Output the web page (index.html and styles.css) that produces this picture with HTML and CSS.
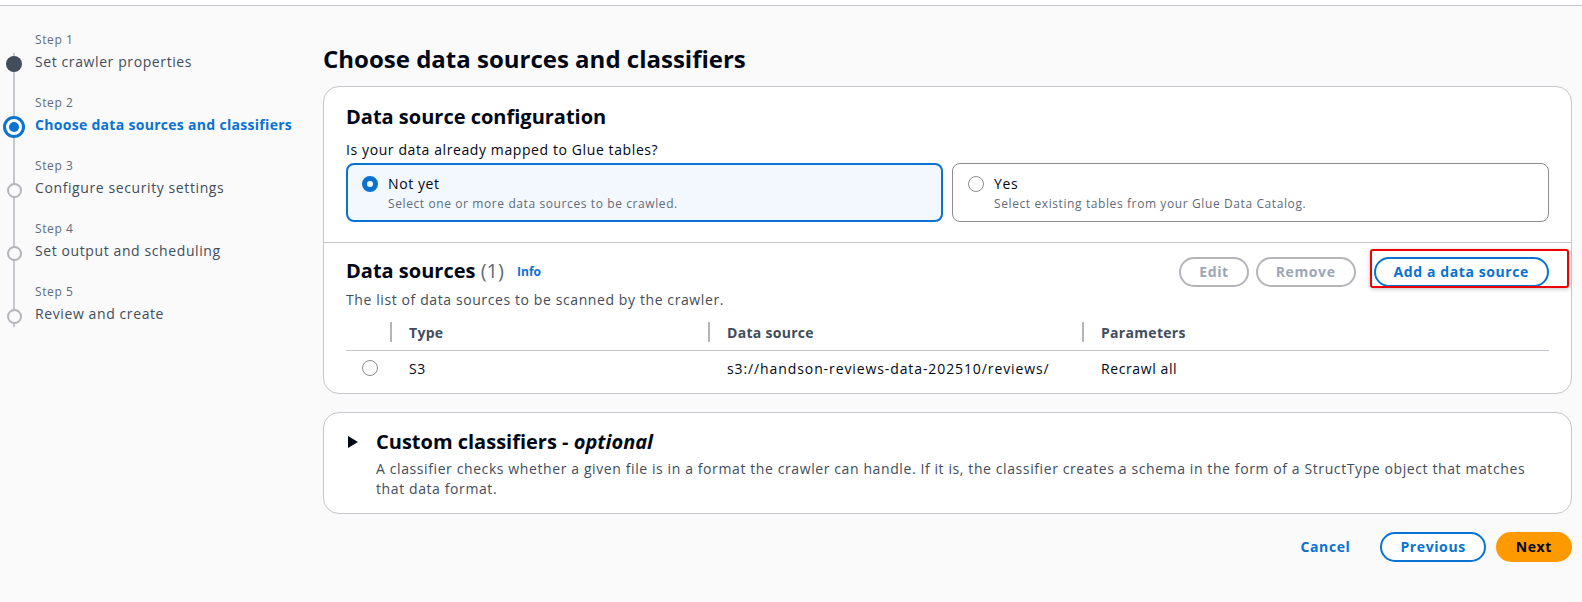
FILE: index.html
```html
<!DOCTYPE html>
<html lang="en">
<head>
<meta charset="utf-8">
<title>Choose data sources and classifiers</title>
<link rel="stylesheet" href="styles.css">
</head>
<body>
<div class="topbar"></div>
<div class="layout">
  <nav class="steps">
    <div class="step">
      <div class="rail"><span class="seg seg-top none"></span><span class="dotbox"><span class="dot done"></span></span><span class="seg seg-bottom"></span></div>
      <div class="step-text"><div class="step-label">Step 1</div><div class="step-title">Set crawler properties</div></div>
    </div>
    <div class="step">
      <div class="rail"><span class="seg seg-top"></span><span class="dotbox"><span class="dot active"><span class="inner"></span></span></span><span class="seg seg-bottom"></span></div>
      <div class="step-text"><div class="step-label">Step 2</div><div class="step-title current">Choose data sources and classifiers</div></div>
    </div>
    <div class="step">
      <div class="rail"><span class="seg seg-top"></span><span class="dotbox"><span class="dot todo"></span></span><span class="seg seg-bottom"></span></div>
      <div class="step-text"><div class="step-label">Step 3</div><div class="step-title">Configure security settings</div></div>
    </div>
    <div class="step">
      <div class="rail"><span class="seg seg-top"></span><span class="dotbox"><span class="dot todo"></span></span><span class="seg seg-bottom"></span></div>
      <div class="step-text"><div class="step-label">Step 4</div><div class="step-title">Set output and scheduling</div></div>
    </div>
    <div class="step">
      <div class="rail"><span class="seg seg-top"></span><span class="dotbox"><span class="dot todo"></span></span><span class="seg seg-bottom none"></span></div>
      <div class="step-text"><div class="step-label">Step 5</div><div class="step-title">Review and create</div></div>
    </div>
  </nav>

  <main class="content">
    <h1 class="page-title">Choose data sources and classifiers</h1>

    <section class="card">
      <div class="card-section config">
        <h2 class="section-title">Data source configuration</h2>
        <div class="question">Is your data already mapped to Glue tables?</div>
        <div class="tiles">
          <div class="tile selected">
            <span class="radio checked"></span>
            <div class="tile-body">
              <div class="tile-title">Not yet</div>
              <div class="tile-desc">Select one or more data sources to be crawled.</div>
            </div>
          </div>
          <div class="tile">
            <span class="radio"></span>
            <div class="tile-body">
              <div class="tile-title">Yes</div>
              <div class="tile-desc">Select existing tables from your Glue Data Catalog.</div>
            </div>
          </div>
        </div>
      </div>

      <div class="card-section sources">
        <div class="sources-head">
          <div class="sources-title">
            <h2 class="section-title">Data sources <span class="count">(1)</span> <span class="info">Info</span></h2>
            <div class="sources-desc">The list of data sources to be scanned by the crawler.</div>
          </div>
          <div class="actions">
            <button class="btn disabled">Edit</button>
            <button class="btn disabled">Remove</button>
            <span class="add-wrap">
              <button class="btn normal">Add a data source</button>
              <span class="highlight"></span>
            </span>
          </div>
        </div>
        <table class="table">
          <thead>
            <tr>
              <th class="col-select"></th>
              <th class="col-type"><div class="th-cell"><span class="sep"></span><span>Type</span></div></th>
              <th class="col-source"><div class="th-cell"><span class="sep"></span><span>Data source</span></div></th>
              <th class="col-params"><div class="th-cell"><span class="sep"></span><span>Parameters</span></div></th>
            </tr>
          </thead>
          <tbody>
            <tr>
              <td class="cell-select"><span class="radio"></span></td>
              <td>S3</td>
              <td class="cell-path">s3://handson-reviews-data-202510/reviews/</td>
              <td>Recrawl all</td>
            </tr>
          </tbody>
        </table>
      </div>
    </section>

    <section class="card expand">
      <span class="caret"></span>
      <div class="expand-body">
        <h2 class="section-title">Custom classifiers - <em>optional</em></h2>
        <p class="expand-desc">A classifier checks whether a given file is in a format the crawler can handle. If it is, the classifier creates a schema in the form of a StructType object that matches that data format.</p>
      </div>
    </section>

    <div class="footer-actions">
      <button class="btn link">Cancel</button>
      <button class="btn normal">Previous</button>
      <button class="btn primary">Next</button>
    </div>
  </main>
</div>
</body>
</html>
```

FILE: styles.css
```css
* { box-sizing: border-box; }

body {
  margin: 0;
  background: #fafafa;
  font-family: "Open Sans", Roboto, "Liberation Sans", sans-serif;
  color: #000716;
  font-size: 14px;
  letter-spacing: 0.6px;
}

.topbar {
  height: 6px;
  background: #ffffff;
  border-bottom: 1px solid #c6c6cd;
}

.layout {
  display: flex;
  align-items: flex-start;
}

/* ---------- Steps nav ---------- */
.steps {
  width: 323px;
  flex: none;
  padding-top: 24px;
}

.step {
  display: flex;
  height: 63px;
}

.rail {
  width: 28px;
  flex: none;
  display: flex;
  flex-direction: column;
  align-items: center;
}

.seg {
  width: 2px;
  background: #c6c6cd;
}
.seg-top { height: 23px; flex: none; }
.seg-bottom { flex: 1; }
.seg.none { background: transparent; }

.dotbox {
  width: 22px;
  height: 22px;
  flex: none;
  display: flex;
  align-items: center;
  justify-content: center;
  background: linear-gradient(#c6c6cd, #c6c6cd) center / 2px 100% no-repeat;
}

.dot {
  border-radius: 50%;
  display: flex;
  align-items: center;
  justify-content: center;
}
.dot.done {
  width: 16px;
  height: 16px;
  background: #414d5c;
}
.dot.active {
  width: 22px;
  height: 22px;
  border: 3px solid #0972d3;
  background: #ffffff;
}
.dot.active .inner {
  width: 10px;
  height: 10px;
  border-radius: 50%;
  background: #0972d3;
}
.dot.todo {
  width: 15px;
  height: 15px;
  border: 2px solid #b4b4bb;
  background: #fafafa;
}

.step-text {
  margin-left: 7px;
}
.step-label {
  font-size: 12px;
  line-height: 20px;
  color: #5f6b7a;
}
.step-title {
  font-size: 14px;
  line-height: 23px;
  color: #414d5c;
}
.step-title.current {
  color: #0972d3;
  font-weight: 700;
  letter-spacing: 0.3px;
}

/* ---------- Main ---------- */
.content {
  flex: 1;
  padding: 37px 10px 0 0;
}

.page-title {
  margin: 0 0 11px;
  font-size: 24px;
  line-height: 32px;
  font-weight: 700;
  letter-spacing: 0;
  color: #000716;
}

.card {
  background: #ffffff;
  border: 1px solid #c6c6cd;
  border-radius: 16px;
}

.card-section.config {
  padding: 17px 22px 20px;
}

.section-title {
  margin: 0;
  font-size: 20px;
  line-height: 26px;
  font-weight: 700;
  letter-spacing: 0;
  color: #000716;
}

.question {
  margin-top: 10px;
  line-height: 20px;
  color: #000716;
}

.tiles {
  margin-top: 3px;
  display: grid;
  grid-template-columns: 1fr 1fr;
  gap: 9px;
}

.tile {
  display: flex;
  gap: 10px;
  border: 1px solid #8c8c94;
  border-radius: 8px;
  padding: 9px 15px 8px;
  background: #ffffff;
}
.tile.selected {
  border: 2px solid #0972d3;
  background: #f2f8fd;
  padding: 8px 14px 7px;
}

.radio {
  display: inline-block;
  flex: none;
  width: 16px;
  height: 16px;
  margin-top: 3px;
  border-radius: 50%;
  border: 1px solid #8c8c94;
  background: #ffffff;
}
.radio.checked {
  border: 5px solid #0972d3;
  background: #ffffff;
}

.tile-title {
  line-height: 22px;
  color: #000716;
}
.tile-desc {
  font-size: 12px;
  line-height: 18px;
  color: #5f6b7a;
}

/* ---------- Data sources ---------- */
.card-section.sources {
  border-top: 1px solid #c6c6cd;
  padding: 15px 22px 7px;
}

.sources-head {
  display: flex;
  justify-content: space-between;
  align-items: flex-start;
}

.count {
  font-weight: 400;
  color: #5f6b7a;
}

.info {
  font-size: 12px;
  font-weight: 700;
  color: #0972d3;
  margin-left: 8px;
  vertical-align: 2px;
}

.sources-desc {
  margin-top: 5px;
  line-height: 20px;
  color: #414d5c;
}

.actions {
  display: flex;
  align-items: center;
  gap: 7px;
  margin-top: -1px;
}

.btn {
  font-family: inherit;
  font-size: 14px;
  font-weight: 700;
  letter-spacing: 0.6px;
  line-height: 26px;
  height: 30px;
  padding: 0 18px;
  border-radius: 20px;
  border: 2px solid transparent;
  background: #ffffff;
  cursor: pointer;
}
.btn.disabled {
  border-color: #b4b4bb;
  color: #9ba7b6;
}
.btn.normal {
  border-color: #0972d3;
  color: #0972d3;
}
.btn.primary {
  background: #ff9900;
  border-color: #ff9900;
  color: #000716;
}
.btn.link {
  background: transparent;
  color: #0972d3;
}

.add-wrap {
  position: relative;
  display: inline-flex;
  margin-left: 11px;
}
.highlight {
  position: absolute;
  left: -4px;
  top: -8px;
  right: -20px;
  bottom: -1px;
  border: 2px solid #ee0000;
  border-radius: 3px;
  box-shadow: 0 1px 4px rgba(0, 0, 0, 0.25);
  pointer-events: none;
}

.table {
  margin-top: 5px;
  width: 100%;
  border-collapse: collapse;
}
.table th {
  height: 35px;
  padding: 0;
  text-align: left;
  font-weight: 700;
  letter-spacing: 0.3px;
  color: #414d5c;
  border-bottom: 1px solid #c6c6cd;
}
.col-select { width: 44px; }
.col-type { width: 318px; }
.col-source { width: 374px; }

.th-cell {
  display: flex;
  align-items: center;
}
.sep {
  width: 2px;
  height: 20px;
  background: #b4b4bb;
  margin-right: 17px;
}

.table td {
  height: 36px;
  padding: 0 0 0 19px;
  color: #000716;
  vertical-align: middle;
}
.table td.cell-path {
  letter-spacing: 0.9px;
}
.table td.cell-select {
  padding-left: 16px;
}
.cell-select .radio {
  margin-top: 4px;
}

/* ---------- Expandable ---------- */
.card.expand {
  margin-top: 18px;
  display: flex;
  padding: 16px 23px 14px 24px;
}

.caret {
  flex: none;
  width: 0;
  height: 0;
  margin-top: 7px;
  margin-right: 18px;
  border-left: 10px solid #000716;
  border-top: 6px solid transparent;
  border-bottom: 6px solid transparent;
}

.expand-desc {
  margin: 4px 0 0;
  line-height: 20px;
  color: #414d5c;
}

/* ---------- Footer ---------- */
.footer-actions {
  margin-top: 18px;
  display: flex;
  justify-content: flex-end;
  gap: 10px;
}
```
